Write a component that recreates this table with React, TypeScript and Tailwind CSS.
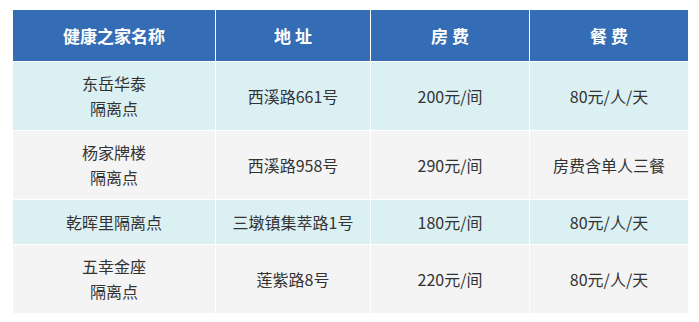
import React from 'react'

const rows = [
  { name: ['东岳华泰', '隔离点'], addr: '西溪路661号', room: '200元/间', meal: '80元/人/天', bg: 'bg-[#dbf0f3]', h: 'h-[68px]' },
  { name: ['杨家牌楼', '隔离点'], addr: '西溪路958号', room: '290元/间', meal: '房费含单人三餐', bg: 'bg-[#f4f4f4]', h: 'h-[68px]' },
  { name: ['乾晖里隔离点'], addr: '三墩镇集萃路1号', room: '180元/间', meal: '80元/人/天', bg: 'bg-[#dbf0f3]', h: 'h-[44px]' },
  { name: ['五幸金座', '隔离点'], addr: '莲紫路8号', room: '220元/间', meal: '80元/人/天', bg: 'bg-[#f4f4f4]', h: 'h-[68px]' },
]

const cell = 'flex flex-col items-center justify-center text-center'

export default function App() {
  return (
    <div className="w-[699px] h-[322px] bg-white pt-[10px] pl-[13px] font-['Noto_Sans_CJK_SC',sans-serif]">
      <div className="grid grid-cols-[202px_154px_158px_158px] gap-px w-[675px] bg-white">
        {['健康之家名称', '地 址', '房 费', '餐 费'].map((t) => (
          <div key={t} className={`${cell} h-[51px] bg-[#346db5] text-white font-bold text-[17px] whitespace-pre`}>
            {t}
          </div>
        ))}
        {rows.map((r, i) => (
          <React.Fragment key={i}>
            <div className={`${cell} ${r.bg} ${r.h} text-[16px] leading-[25px] text-[#333]`}>
              {r.name.map((n) => (
                <span key={n}>{n}</span>
              ))}
            </div>
            <div className={`${cell} ${r.bg} ${r.h} text-[16px] text-[#333]`}>{r.addr}</div>
            <div className={`${cell} ${r.bg} ${r.h} text-[16px] text-[#333]`}>{r.room}</div>
            <div className={`${cell} ${r.bg} ${r.h} text-[16px] text-[#333]`}>{r.meal}</div>
          </React.Fragment>
        ))}
      </div>
    </div>
  )
}
